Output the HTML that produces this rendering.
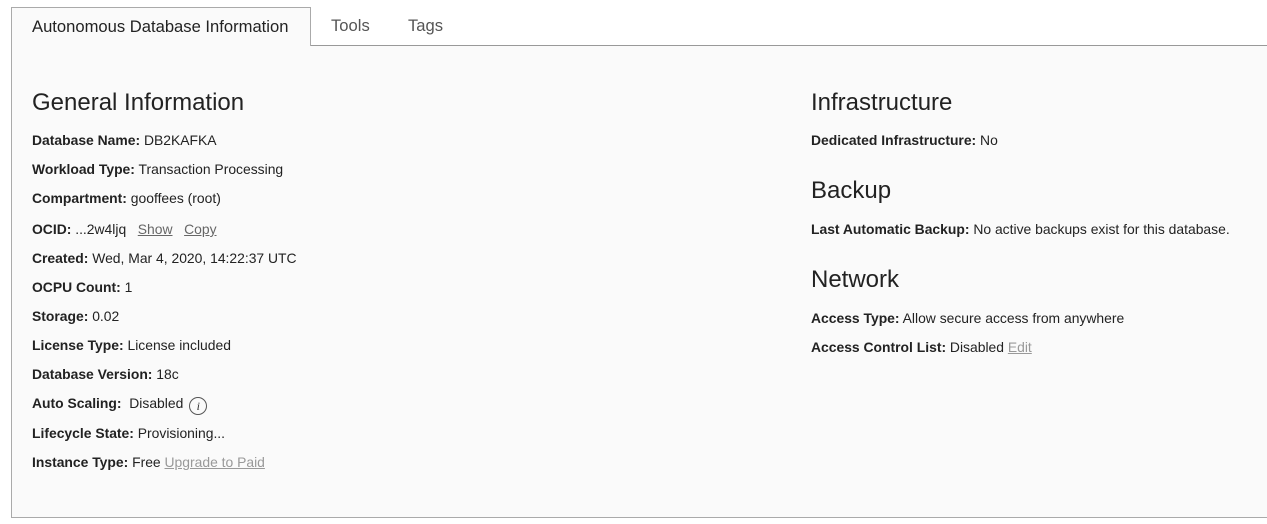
<!DOCTYPE html>
<html><head><meta charset="utf-8"><style>
body{margin:0;width:1267px;height:524px;background:#fff;font-family:"Liberation Sans",Arial,sans-serif;color:#222;position:relative;overflow:hidden}
.panel{position:absolute;left:11px;top:45px;width:1260px;height:473px;background:#fafafa;border-left:1px solid #aaa;border-bottom:1px solid #aaa;box-sizing:border-box}
.topline{position:absolute;left:310px;top:45px;width:957px;height:1px;background:#999}
.tab{position:absolute;left:11px;top:7px;width:300px;height:39px;background:#fafafa;border:1px solid #aaa;border-bottom:none;box-sizing:border-box}
.t{position:absolute;font-size:16.6px;color:#555;line-height:20px;white-space:nowrap}
.r{position:absolute;font-size:13.9px;line-height:16px;white-space:nowrap;color:#222}
.r b{font-weight:bold;color:#222}
.h{position:absolute;font-size:24px;line-height:28px;color:#222;white-space:nowrap}
a{color:#999;text-decoration:underline}
.lk{color:#666}
.info{display:inline-block;width:16px;height:16px;border:1px solid #555;border-radius:50%;font-size:12px;font-style:italic;text-align:center;line-height:16px;vertical-align:-2px;margin-left:6px;font-family:"Liberation Serif",serif;color:#333}
</style></head><body>
<div class="panel"></div>
<div class="topline"></div>
<div class="tab"></div>
<div class="t" style="left:32px;top:17px;color:#222">Autonomous Database Information</div>
<div class="t" style="left:331px;top:16px">Tools</div>
<div class="t" style="left:408px;top:16px">Tags</div>

<div class="h" style="left:32px;top:89px">General Information</div>
<div class="r" style="left:32px;top:132px"><b>Database Name:</b> DB2KAFKA</div>
<div class="r" style="left:32px;top:161px"><b>Workload Type:</b> Transaction Processing</div>
<div class="r" style="left:32px;top:190px"><b>Compartment:</b> gooffees (root)</div>
<div class="r" style="left:32px;top:221px"><b>OCID:</b> ...2w4ljq &nbsp; <a class="lk">Show</a> &nbsp; <a class="lk">Copy</a></div>
<div class="r" style="left:32px;top:250px"><b>Created:</b> Wed, Mar 4, 2020, 14:22:37 UTC</div>
<div class="r" style="left:32px;top:279px"><b>OCPU Count:</b> 1</div>
<div class="r" style="left:32px;top:308px"><b>Storage:</b> 0.02</div>
<div class="r" style="left:32px;top:337px"><b>License Type:</b> License included</div>
<div class="r" style="left:32px;top:366px"><b>Database Version:</b> 18c</div>
<div class="r" style="left:32px;top:395px"><b>Auto Scaling:</b>&nbsp; Disabled<span class="info">i</span></div>
<div class="r" style="left:32px;top:425px"><b>Lifecycle State:</b> Provisioning...</div>
<div class="r" style="left:32px;top:454px"><b>Instance Type:</b> Free <a>Upgrade to Paid</a></div>

<div class="h" style="left:811px;top:89px">Infrastructure</div>
<div class="r" style="left:811px;top:132px"><b>Dedicated Infrastructure:</b> No</div>
<div class="h" style="left:811px;top:177px">Backup</div>
<div class="r" style="left:811px;top:221px"><b>Last Automatic Backup:</b> No active backups exist for this database.</div>
<div class="h" style="left:811px;top:266px">Network</div>
<div class="r" style="left:811px;top:310px"><b>Access Type:</b> Allow secure access from anywhere</div>
<div class="r" style="left:811px;top:339px"><b>Access Control List:</b> Disabled <a>Edit</a></div>
</body></html>
